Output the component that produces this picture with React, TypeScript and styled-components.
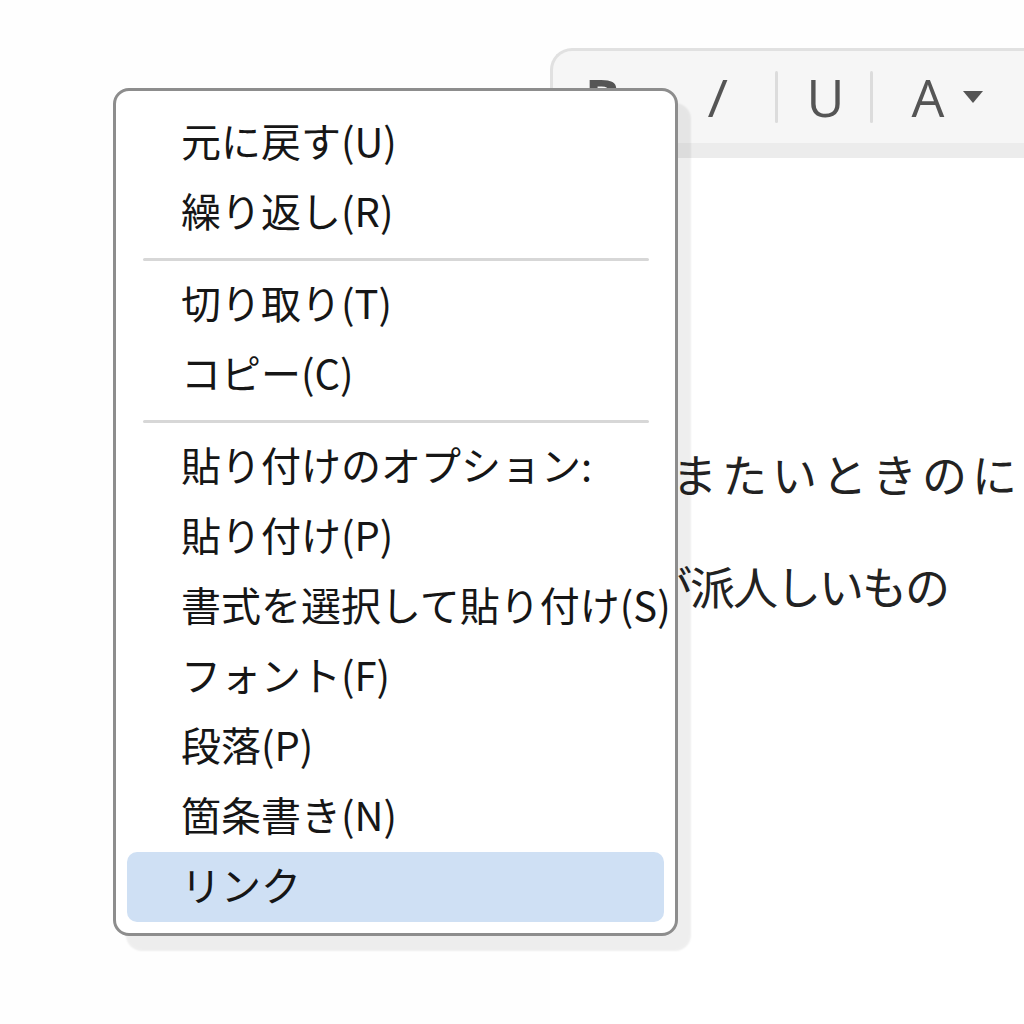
import React from 'react'
import styled, { createGlobalStyle } from 'styled-components'

const GlobalStyle = createGlobalStyle`
  html, body {
    margin: 0;
    padding: 0;
    background: #fefefe;
  }
  body {
    font-family: "Noto Sans CJK JP", "Noto Sans", sans-serif;
    overflow: hidden;
  }
`

const Page = styled('main')`
  position: relative;
  width: 1024px;
  height: 1024px;
  overflow: hidden;
  box-sizing: border-box;
  padding: 48px 0 0 550px;
  background: #fefefe;
`

const EditorWindow = styled('section')`
  width: 520px;
  height: 1010px;
  display: flex;
  flex-direction: column;
`

const Toolbar = styled('div')`
  flex-shrink: 0;
  height: 92px;
  display: flex;
  align-items: center;
  padding-left: 32px;
  background: #f6f6f6;
  border-top: 3px solid #e1e1e1;
  border-left: 3px solid #e1e1e1;
  border-top-left-radius: 22px;
  border-bottom: 15px solid #ececec;
`

const ToolGlyph = styled('span')<{ $space: number; $bold?: boolean; $slant?: boolean }>`
  display: inline-block;
  margin-left: ${p => p.$space}px;
  font-family: "Open Sans", "Noto Sans", sans-serif;
  font-size: 52px;
  line-height: 1;
  color: #555;
  font-weight: ${p => (p.$bold ? 700 : 400)};
  transform: ${p => (p.$slant ? 'skewX(-22deg)' : 'none')};
`

const ToolSep = styled('span')<{ $space: number }>`
  margin-left: ${p => p.$space}px;
  width: 3px;
  height: 52px;
  border-radius: 2px;
  background: #dcdcdc;
`

const Caret = styled('span')<{ $space: number }>`
  margin-left: ${p => p.$space}px;
  width: 0;
  height: 0;
  border-left: 10px solid transparent;
  border-right: 10px solid transparent;
  border-top: 12px solid #555;
`

const DocArea = styled('div')`
  flex: 1;
  background: #fff;
  padding-top: 286px;
`

const DocLine = styled('p')<{ $indent: number; $spacing: number }>`
  margin: 0 0 52px;
  padding-left: ${p => p.$indent}px;
  font-size: 45px;
  line-height: 60px;
  letter-spacing: ${p => p.$spacing}px;
  color: #222;
  white-space: nowrap;
`

const Menu = styled('div')`
  position: absolute;
  left: 113px;
  top: 88px;
  width: 565px;
  box-sizing: border-box;
  display: flex;
  flex-direction: column;
  padding: 17px 11px 11px;
  background: #fff;
  border: 3px solid #8d8d8d;
  border-radius: 16px;
  box-shadow: 13px 15px 2px rgba(0, 0, 0, 0.065);
`

const MenuItem = styled('div')<{ $active?: boolean }>`
  height: 70px;
  box-sizing: border-box;
  display: flex;
  align-items: center;
  padding: 0 0 6px 54px;
  border-radius: 10px;
  font-size: 40px;
  font-weight: 400;
  color: #161616;
  white-space: nowrap;
  background: ${p => (p.$active ? '#cfe0f4' : 'transparent')};
`

const MenuSep = styled('div')`
  height: 3px;
  margin: 10px 15px 9px 16px;
  border-radius: 2px;
  background: #d7d7d7;
`

const menuGroups = [
  ['元に戻す(U)', '繰り返し(R)'],
  ['切り取り(T)', 'コピー(C)'],
  ['貼り付けのオプション:', '貼り付け(P)', '書式を選択して貼り付け(S)', 'フォント(F)', '段落(P)', '箇条書き(N)', 'リンク'],
]

export default function App() {
  return (
    <Page>
      <GlobalStyle />
      <EditorWindow>
        <Toolbar>
          <ToolGlyph $space={0} $bold>B</ToolGlyph>
          <ToolGlyph $space={91} $slant>I</ToolGlyph>
          <ToolSep $space={50} />
          <ToolGlyph $space={28}>U</ToolGlyph>
          <ToolSep $space={26} />
          <ToolGlyph $space={38}>A</ToolGlyph>
          <Caret $space={19} />
        </Toolbar>
        <DocArea>
          <DocLine $indent={22} $spacing={5}>読みまたいときのに</DocLine>
          <DocLine $indent={54} $spacing={-2}>色が派人しいもの</DocLine>
        </DocArea>
      </EditorWindow>

      <Menu>
        {menuGroups.map((group, gi) => (
          <React.Fragment key={gi}>
            {gi > 0 && <MenuSep />}
            {group.map(label => (
              <MenuItem key={label} $active={label === 'リンク'}>{label}</MenuItem>
            ))}
          </React.Fragment>
        ))}
      </Menu>
    </Page>
  )
}
